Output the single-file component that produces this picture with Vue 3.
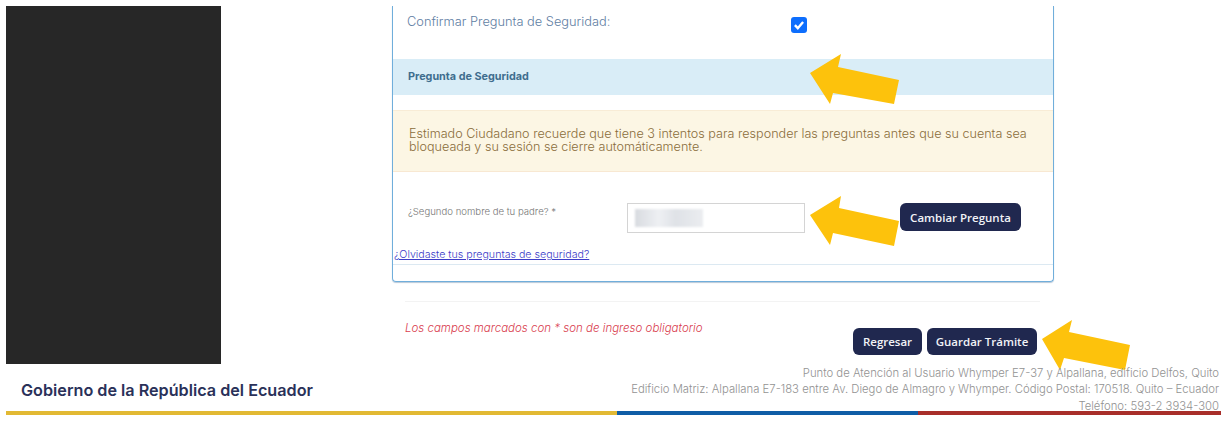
<script setup>
const footerLines = [
  'Punto de Atención al Usuario Whymper E7-37 y Alpallana, edificio Delfos, Quito',
  'Edificio Matriz: Alpallana E7-183 entre Av. Diego de Almagro y Whymper. Código Postal: 170518. Quito – Ecuador',
  'Teléfono: 593-2 3934-300'
]
const arrows = [
  '841,54 810,73 830,104 833,93 894,104 899,80 838,67',
  '841,196 810,215 830,245 833,233 894,246 899,221 839,208',
  '1072,320 1042,339 1060,370 1064,358 1125,370 1130,345 1069,332'
]
</script>

<template>
  <div class="page">
    <div class="top">
      <div class="sidebar"></div>
      <main class="content">
        <section class="panel">
          <div class="confirm">
            <span class="confirm-label">Confirmar Pregunta de Seguridad:</span>
            <span class="check">
              <svg width="12" height="12" viewBox="0 0 12 12"><path d="M1.9 6.2 4.8 9.2 10.1 3" fill="none" stroke="#fff" stroke-width="2.4"/></svg>
            </span>
          </div>
          <div class="band">Pregunta de Seguridad</div>
          <div class="alert">
            Estimado Ciudadano recuerde que tiene 3 intentos para responder las preguntas antes que su cuenta sea
            bloqueada y su sesión se cierre automáticamente.
          </div>
          <div class="question">
            <label>¿Segundo nombre de tu padre? *</label>
            <div class="input"><div class="smudge"></div></div>
            <button class="btn change">Cambiar Pregunta</button>
          </div>
          <a class="forgot" href="#">¿Olvidaste tus preguntas de seguridad?</a>
          <div class="panel-foot"></div>
        </section>
        <div class="divider"></div>
        <div class="actions">
          <span class="required">Los campos marcados con * son de ingreso obligatorio</span>
          <div class="buttons">
            <button class="btn back">Regresar</button>
            <button class="btn save">Guardar Trámite</button>
          </div>
        </div>
      </main>
    </div>
    <footer class="footer">
      <div class="footer-row">
        <strong>Gobierno de la República del Ecuador</strong>
        <div class="address">
          <div v-for="line in footerLines" :key="line">{{ line }}</div>
        </div>
      </div>
      <div class="stripe"><i class="yellow"></i><i class="blue"></i><i class="red"></i></div>
    </footer>
    <svg class="arrows" width="1231" height="425" viewBox="0 0 1231 425">
      <polygon v-for="p in arrows" :key="p" :points="p" fill="#fdc20c" />
    </svg>
  </div>
</template>

<style>
html, body { margin: 0; background: #fff; }
</style>

<style scoped>
.page {
  position: relative;
  width: 1231px;
  height: 425px;
  overflow: hidden;
  background: #fff;
  font-family: "Inter", "Liberation Sans", sans-serif;
}
.top {
  display: flex;
  padding: 6px 0 0 6px;
  height: 358px;
}
.sidebar {
  width: 215px;
  height: 358px;
  background: #272727;
}
.content {
  margin-left: 171px;
  width: 662px;
}
.panel {
  height: 276px;
  box-sizing: border-box;
  border: 1px solid #70aedb;
  border-top: 0;
  border-radius: 0 0 4px 4px;
  box-shadow: 0 1px 1px #b8c8d8;
  display: flex;
  flex-direction: column;
}
.confirm {
  height: 53px;
  display: flex;
  padding: 0 14px;
}
.confirm-label {
  margin-top: 8px;
  width: 384px;
  font-size: 12.8px;
  font-weight: 300;
  line-height: 15px;
  color: #5f7ea3;
  white-space: nowrap;
}
.check {
  margin-top: 11px;
  width: 16px;
  height: 16px;
  border-radius: 3px;
  background: #0d6efd;
  display: flex;
  align-items: center;
  justify-content: center;
}
.band {
  height: 36px;
  line-height: 36px;
  padding-left: 15px;
  background: #d9edf7;
  color: #3f6d8e;
  font-size: 10.8px;
  font-weight: 700;
}
.alert {
  margin-top: 15px;
  height: 62px;
  box-sizing: border-box;
  padding: 17px 14px 0 16px;
  background: #fcf6e4;
  border-top: 1px solid #f8ecd6;
  border-bottom: 1px solid #f8e8d2;
  color: #8a6d3b;
  font-size: 12.6px;
  font-weight: 300;
  line-height: 12.5px;
}
.question {
  display: flex;
  align-items: flex-start;
  margin-top: 31px;
  height: 43px;
  padding-left: 15px;
}
.question label {
  width: 219px;
  padding-top: 2px;
  font-size: 9.6px;
  font-weight: 300;
  line-height: 14px;
  color: #777;
  white-space: nowrap;
}
.input {
  width: 178px;
  height: 30px;
  box-sizing: border-box;
  border: 1px solid #d4d4d4;
  display: flex;
  align-items: center;
  padding-left: 7px;
}
.smudge {
  width: 68px;
  height: 18px;
  background: linear-gradient(90deg, #d8dbe0, #eef0f3 35%, #dfe2e7 60%, #ebedf0);
  filter: blur(1px);
}
.btn {
  height: 27px;
  border: 0;
  border-radius: 6px;
  background: #20284f;
  color: #f2f3f7;
  font-family: "Open Sans", "Liberation Sans", sans-serif;
  font-size: 11.5px;
  font-weight: 600;
  padding: 0;
  white-space: nowrap;
}
.change {
  width: 121px;
  height: 28px;
  margin-left: 95px;
}
.back { width: 69px; }
.save { width: 110px; }
.forgot {
  display: block;
  margin-left: 1px;
  font-size: 10.65px;
  font-weight: 300;
  line-height: 18px;
  color: #3d3dc8;
  text-decoration: underline;
  width: max-content;
}
.panel-foot {
  border-top: 1px solid #dce9f2;
  flex: 1;
}
.divider {
  margin: 19px 14px 0 13px;
  border-top: 1px solid #f3f3f3;
}
.actions {
  display: flex;
  justify-content: space-between;
  padding: 18px 17px 0 13px;
}
.required {
  margin-top: 1px;
  font-size: 11.5px;
  font-style: italic;
  font-weight: 300;
  line-height: 14px;
  color: #d9404f;
  white-space: nowrap;
}
.buttons {
  display: flex;
  gap: 5px;
  margin-top: 8px;
}
.footer {
  height: 61px;
  padding: 0 10px 0 6px;
}
.footer-row {
  display: flex;
  justify-content: space-between;
  height: 47px;
}
.footer-row strong {
  margin: 18px 0 0 15px;
  font-size: 16.2px;
  font-weight: 600;
  line-height: 16px;
  color: #2a3159;
  white-space: nowrap;
}
.address {
  position: relative;
  z-index: 2;
  margin-top: 1px;
  text-align: right;
  font-size: 11.3px;
  font-weight: 300;
  line-height: 16.4px;
  color: #929292;
  padding-right: 2px;
  white-space: nowrap;
}
.stripe {
  display: flex;
  height: 4px;
}
.stripe i { display: block; }
.yellow { width: 611px; background: #e2b933; }
.blue { width: 301px; background: #0f5da6; }
.red { width: 303px; background: #a82e2a; }
.arrows {
  position: absolute;
  left: 0;
  top: 0;
  z-index: 1;
  pointer-events: none;
}
</style>
